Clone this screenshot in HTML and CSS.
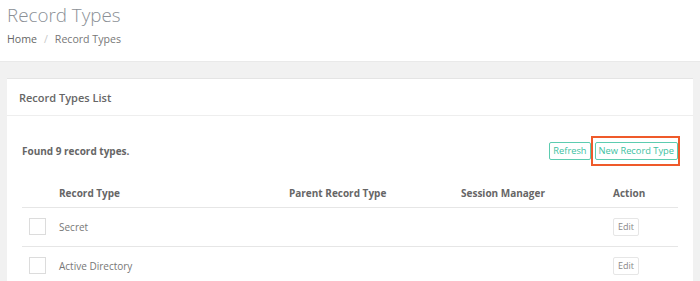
FILE: index.html
```html
<!DOCTYPE html>
<html lang="en">
<head>
<meta charset="utf-8">
<title>Record Types</title>
<link rel="stylesheet" href="styles.css">
</head>
<body>
<header class="page-header">
  <h1 class="page-title">Record Types</h1>
  <nav class="breadcrumb">
    <a class="crumb">Home</a>
    <span class="sep">/</span>
    <span class="crumb current">Record Types</span>
  </nav>
</header>
<main class="content">
  <section class="panel">
    <div class="panel-heading">Record Types List</div>
    <div class="panel-body">
      <div class="toolbar">
        <span class="found">Found 9 record types.</span>
        <div class="actions">
          <button class="btn-outline">Refresh</button>
          <button class="btn-outline highlighted">New Record Type</button>
        </div>
      </div>
      <table class="grid">
        <colgroup>
          <col class="c-check">
          <col class="c-type">
          <col class="c-parent">
          <col class="c-session">
          <col class="c-action">
        </colgroup>
        <thead>
          <tr>
            <th></th>
            <th>Record Type</th>
            <th>Parent Record Type</th>
            <th>Session Manager</th>
            <th>Action</th>
          </tr>
        </thead>
        <tbody>
          <tr>
            <td><span class="checkbox"></span></td>
            <td>Secret</td>
            <td></td>
            <td></td>
            <td><button class="btn-edit">Edit</button></td>
          </tr>
          <tr>
            <td><span class="checkbox"></span></td>
            <td>Active Directory</td>
            <td></td>
            <td></td>
            <td><button class="btn-edit">Edit</button></td>
          </tr>
        </tbody>
      </table>
    </div>
  </section>
</main>
</body>
</html>
```
FILE: styles.css
```css
* { box-sizing: border-box; }
html, body { height: 100%; }
body {
  margin: 0;
  background: #f1f1f1;
  font-family: "Open Sans", "Noto Sans", sans-serif;
  color: #777;
  overflow: hidden;
}
.page-header {
  background: #fff;
  height: 62px;
  padding: 0 7px;
  border-bottom: 1px solid #e9e9e9;
}
.page-title {
  margin: 0;
  padding-top: 2px;
  font-size: 18.8px;
  font-weight: 300;
  line-height: 26px;
  color: #8b9096;
}
.breadcrumb {
  margin-top: 4px;
  font-size: 10.6px;
  line-height: 15px;
  display: flex;
  gap: 6px;
}
.crumb { color: #666; }
.crumb.current { color: #777; }
.sep { color: #c8c8c8; padding: 0 1px; }
.content {
  padding: 16px 7px 0;
}
.panel {
  background: #fff;
  border-top: 1px solid #e4e4e4;
}
.panel-heading {
  height: 37px;
  padding: 0 12px;
  display: flex;
  align-items: center;
  font-size: 11px;
  font-weight: 600;
  color: #666;
  border-bottom: 1px solid #eeeeee;
}
.panel-body {
  padding: 26px 15px 0 15px;
}
.toolbar {
  display: flex;
  align-items: center;
  justify-content: space-between;
  height: 18px;
}
.found {
  font-size: 10px;
  font-weight: 700;
  color: #666;
}
.actions {
  display: flex;
  gap: 4px;
}
.btn-outline {
  height: 18px;
  padding: 0 3px;
  font-family: inherit;
  font-size: 9.3px;
  color: #3cbf9f;
  background: #fff;
  border: 1px solid #5cccb0;
  border-radius: 2px;
  line-height: 16px;
}
.highlighted {
  position: relative;
}
.highlighted::after {
  content: "";
  position: absolute;
  left: -5px;
  right: -3px;
  top: -7px;
  bottom: -7px;
  border: 2px solid #ef5a2a;
}
.grid {
  width: 100%;
  margin-top: 20px;
  border-collapse: collapse;
  table-layout: fixed;
  font-size: 10px;
}
.c-check { width: 37px; }
.c-type { width: 230px; }
.c-parent { width: 172px; }
.c-session { width: 152px; }
.grid th {
  height: 27px;
  padding: 0;
  text-align: left;
  font-weight: 700;
  color: #666;
  border-bottom: 1px solid #e6e6e6;
}
.grid td {
  height: 39px;
  padding: 0;
  color: #777;
  border-bottom: 1px solid #e6e6e6;
}
.checkbox {
  display: block;
  width: 17px;
  height: 17px;
  margin-left: 7px;
  border: 1px solid #dcdcdc;
}
.btn-edit {
  height: 18px;
  width: 26px;
  padding: 0;
  font-family: inherit;
  font-size: 9px;
  color: #888;
  background: #fff;
  border: 1px solid #e6e6e6;
  border-radius: 2px;
}
```
